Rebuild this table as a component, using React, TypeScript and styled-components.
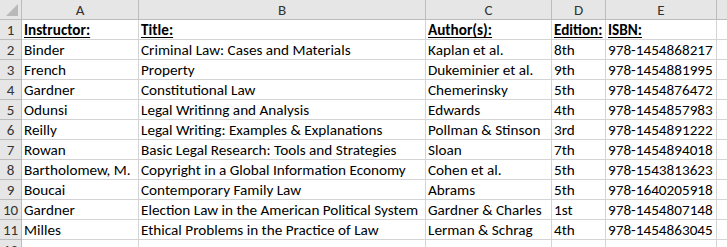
import React from "react";
import styled, { createGlobalStyle } from "styled-components";

const Global = createGlobalStyle`
  html, body { margin: 0; padding: 0; background: #ffffff; overflow: hidden; }
  body { font-family: "Carlito", "Lato", "Liberation Sans", sans-serif; }
`;

const COLS = ["A", "B", "C", "D", "E", ""];
const WIDTHS = [22, 117, 287, 126, 54, 111, 40];

const rows: string[][] = [
  ["Instructor:", "Title:", "Author(s):", "Edition:", "ISBN:"],
  ["Binder", "Criminal Law: Cases and Materials", "Kaplan et al.", "8th", "978-1454868217"],
  ["French", "Property", "Dukeminier et al.", "9th", "978-1454881995"],
  ["Gardner", "Constitutional Law", "Chemerinsky", "5th", "978-1454876472"],
  ["Odunsi", "Legal Writinng and Analysis", "Edwards", "4th", "978-1454857983"],
  ["Reilly", "Legal Writing: Examples & Explanations", "Pollman & Stinson", "3rd", "978-1454891222"],
  ["Rowan", "Basic Legal Research: Tools and Strategies", "Sloan", "7th", "978-1454894018"],
  ["Bartholomew, M.", "Copyright in a Global Information Economy", "Cohen et al.", "5th", "978-1543813623"],
  ["Boucai", "Contemporary Family Law", "Abrams", "5th", "978-1640205918"],
  ["Gardner", "Election Law in the American Political System", "Gardner & Charles", "1st", "978-1454807148"],
  ["Milles", "Ethical Problems in the Practice of Law", "Lerman & Schrag", "4th", "978-1454863045"],
  ["", "", "", "", ""],
];

const Sheet = styled.div`
  display: grid;
  grid-template-columns: ${WIDTHS.map((w) => `${w}px`).join(" ")};
  grid-auto-rows: 20px;
  width: 727px;
  height: 247px;
  overflow: hidden;
`;

const Corner = styled.div`
  background: #e6e6e6;
  border-right: 1px solid #bcbcbc;
  border-bottom: 1px solid #bcbcbc;
  box-sizing: border-box;
  position: relative;
  &::after {
    content: "";
    position: absolute;
    right: 3px;
    bottom: 3px;
    width: 0;
    height: 0;
    border-left: 12px solid transparent;
    border-bottom: 12px solid #b9b9b9;
  }
`;

const ColHeader = styled.div`
  background: #e6e6e6;
  border-right: 1px solid #bcbcbc;
  border-bottom: 1px solid #bcbcbc;
  box-sizing: border-box;
  color: #333;
  font-size: 15px;
  display: flex;
  align-items: center;
  justify-content: center;
  padding-top: 1px;
`;

const RowHeader = styled.div`
  background: #e6e6e6;
  border-right: 1px solid #bcbcbc;
  border-bottom: 1px solid #bcbcbc;
  box-sizing: border-box;
  color: #333;
  font-size: 15px;
  display: flex;
  align-items: flex-end;
  justify-content: center;
  padding-bottom: 0;
  line-height: 18px;
`;

const Cell = styled.div<{ $bold?: boolean }>`
  border-right: 1px solid #d4d4d4;
  border-bottom: 1px solid #d4d4d4;
  box-sizing: border-box;
  color: #000;
  font-size: 15.2px;
  font-weight: ${(p) => (p.$bold ? 700 : 400)};
  text-decoration: ${(p) => (p.$bold ? "underline" : "none")};
  text-underline-offset: 2px;
  display: flex;
  align-items: flex-end;
  padding: 0 0 0 2px;
  line-height: 18px;
  white-space: nowrap;
  overflow: visible;
`;

export default function App() {
  return (
    <>
      <Global />
      <Sheet>
        <Corner />
        {COLS.map((c, i) => (
          <ColHeader key={i}>{c}</ColHeader>
        ))}
        {rows.map((r, ri) => (
          <React.Fragment key={ri}>
            <RowHeader>{ri + 1}</RowHeader>
            {r.map((v, ci) => (
              <Cell key={ci} $bold={ri === 0 && v !== ""}>
                {v}
              </Cell>
            ))}
            <Cell />
          </React.Fragment>
        ))}
      </Sheet>
    </>
  );
}
